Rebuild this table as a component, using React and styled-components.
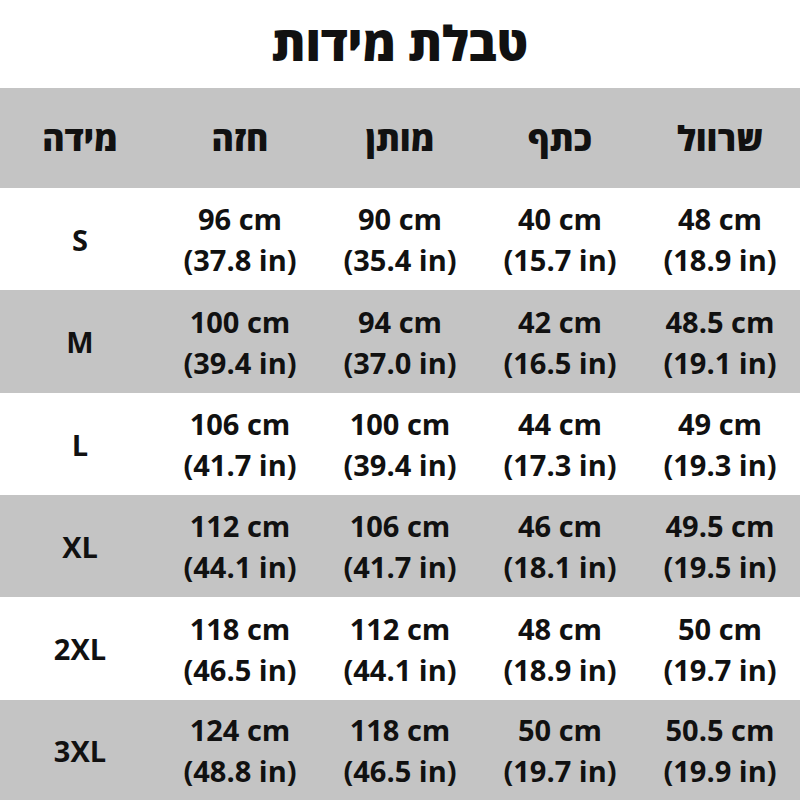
import React from "react";
import styled, { createGlobalStyle } from "styled-components";

const Global = createGlobalStyle`
  html, body { margin: 0; padding: 0; background: #ffffff; }
  body { font-family: "Open Sans", "DejaVu Sans", sans-serif; color: #111111; }
`;

const Page = styled.div`
  width: 800px;
  height: 800px;
  display: flex;
  flex-direction: column;
  overflow: hidden;
  background: #ffffff;
`;

const Title = styled.h1`
  margin: 0;
  height: 88px;
  display: flex;
  align-items: center;
  justify-content: center;
  font-size: 48px;
  font-weight: 800;
  direction: rtl;
  padding-bottom: 4px;
  box-sizing: border-box;
`;

const Row = styled.div`
  display: grid;
  grid-template-columns: repeat(5, 1fr);
  height: ${(p) => p.$h}px;
  background: ${(p) => (p.$shade ? "#c4c4c4" : "#ffffff")};
`;

const HeadCell = styled.div`
  display: flex;
  align-items: center;
  justify-content: center;
  font-size: 34px;
  font-weight: 800;
  direction: rtl;
`;

const SizeCell = styled.div`
  display: flex;
  align-items: center;
  justify-content: center;
  font-size: 29px;
  font-weight: 700;
`;

const ValueCell = styled.div`
  display: flex;
  flex-direction: column;
  align-items: center;
  justify-content: center;
  font-size: 29px;
  font-weight: 700;
  line-height: 41px;
  white-space: nowrap;
`;

const headers = ["מידה", "חזה", "מותן", "כתף", "שרוול"];

const rows = [
  ["S", ["96", "37.8"], ["90", "35.4"], ["40", "15.7"], ["48", "18.9"]],
  ["M", ["100", "39.4"], ["94", "37.0"], ["42", "16.5"], ["48.5", "19.1"]],
  ["L", ["106", "41.7"], ["100", "39.4"], ["44", "17.3"], ["49", "19.3"]],
  ["XL", ["112", "44.1"], ["106", "41.7"], ["46", "18.1"], ["49.5", "19.5"]],
  ["2XL", ["118", "46.5"], ["112", "44.1"], ["48", "18.9"], ["50", "19.7"]],
  ["3XL", ["124", "48.8"], ["118", "46.5"], ["50", "19.7"], ["50.5", "19.9"]],
];

const heights = [102, 103, 102, 102, 103, 100];

export default function App() {
  return (
    <Page>
      <Global />
      <Title>טבלת מידות</Title>
      <Row $shade $h={100}>
        {headers.map((h) => (
          <HeadCell key={h}>{h}</HeadCell>
        ))}
      </Row>
      {rows.map((r, i) => (
        <Row key={r[0]} $shade={i % 2 === 1} $h={heights[i]}>
          <SizeCell>{r[0]}</SizeCell>
          {r.slice(1).map(([cm, inch], j) => (
            <ValueCell key={j}>
              <span>{cm} cm</span>
              <span>({inch} in)</span>
            </ValueCell>
          ))}
        </Row>
      ))}
    </Page>
  );
}
